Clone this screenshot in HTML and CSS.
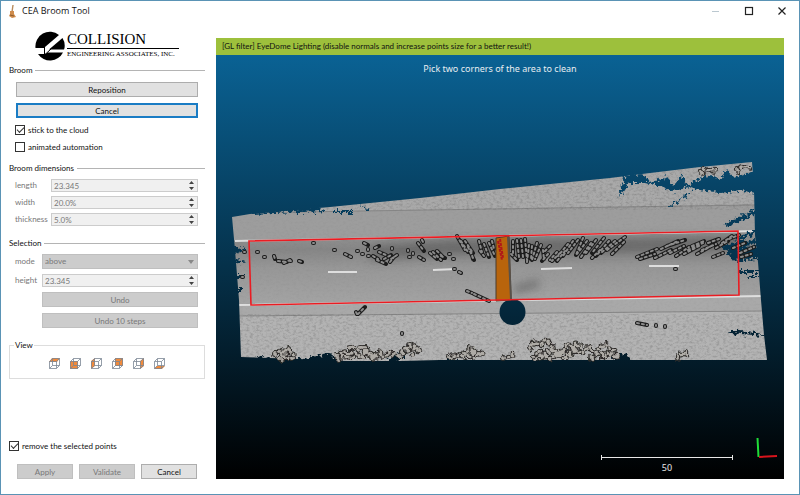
FILE: index.html
```html
<!DOCTYPE html>
<html lang="en">
<head>
  <meta charset="UTF-8" />
  <meta name="viewport" content="width=device-width, initial-scale=1" />
  <title>CEA Broom Tool</title>
  <link rel="stylesheet" href="styles.css">
</head>
<body>

<header class="titlebar">
  <svg class="app-icon" viewBox="0 0 12 16" aria-hidden="true">
    <path d="M7 2 L6 9" stroke="#b98a5a" stroke-width="1.4" />
    <path d="M4 8 L8 8 L8 11 L10 14 L6 15 L3 13 L4 11 Z" fill="#cf8c4c" />
    <path d="M4 12 L8 13" stroke="#8c5a2c" stroke-width="1" />
  </svg>
  <h1>CEA Broom Tool</h1>
  <div class="window-buttons">
    <button type="button" aria-label="Minimize"><svg viewBox="0 0 10 10"><path d="M1 5.5 H8" stroke="#bbc8d0" /></svg></button>
    <button type="button" aria-label="Maximize"><svg viewBox="0 0 10 10"><rect x="1.5" y="1.5" width="7" height="7" fill="none" stroke="#222" stroke-width="1.2" /></svg></button>
    <button type="button" aria-label="Close"><svg viewBox="0 0 10 10"><path d="M1.5 1.5 L8.5 8.5 M8.5 1.5 L1.5 8.5" stroke="#222" stroke-width="1.2" /></svg></button>
  </div>
</header>

<main class="workspace">
  <form class="panel">
    <div class="brand">
      <svg class="brand-mark" viewBox="0 0 30 30" aria-hidden="true">
        <path d="M0.500 17 A14.500 14.500 0 0 1 24 4 L10 16 V17 Z" fill="#000" />
        <path d="M27.500 7 A14.500 14.500 0 0 1 29.500 17 L29 18.500 H14 Z" fill="#000" />
        <path d="M3 23 H10 L13 21.500 H28 A14.500 14.500 0 0 1 3 23 Z" fill="#000" />
        <path d="M9.500 16 V24 M9.500 24 L16 18" stroke="#000" fill="none" />
      </svg>
      <div class="brand-text">
        <span class="brand-name">COLLISION</span>
        <span class="brand-sub">ENGINEERING ASSOCIATES, INC.</span>
      </div>
    </div>

    <fieldset class="group">
      <legend>Broom</legend>
      <div class="stack">
        <button type="button">Reposition</button>
        <button type="button" class="focused">Cancel</button>
      </div>
      <label class="check"><input type="checkbox" checked> stick to the cloud</label>
      <label class="check"><input type="checkbox"> animated automation</label>
    </fieldset>

    <fieldset class="group">
      <legend>Broom dimensions</legend>
      <div class="fields">
        <label for="length">length</label>
        <div class="spin"><input type="text" id="length" value="23.345" disabled><svg viewBox="0 0 5 9"><path d="M0 3 L2.500 0 L5 3 Z M0 6 L2.500 9 L5 6 Z" /></svg></div>
        <label for="width">width</label>
        <div class="spin"><input type="text" id="width" value="20.0%" disabled><svg viewBox="0 0 5 9"><path d="M0 3 L2.500 0 L5 3 Z M0 6 L2.500 9 L5 6 Z" /></svg></div>
        <label for="thickness">thickness</label>
        <div class="spin"><input type="text" id="thickness" value="5.0%" disabled><svg viewBox="0 0 5 9"><path d="M0 3 L2.500 0 L5 3 Z M0 6 L2.500 9 L5 6 Z" /></svg></div>
      </div>
    </fieldset>

    <fieldset class="group">
      <legend>Selection</legend>
      <div class="fields fields-selection">
        <label for="mode">mode</label>
        <div class="combo">
          <select id="mode" disabled><option>above</option></select>
          <svg viewBox="0 0 6 4"><path d="M0 0 H6 L3 4 Z" /></svg>
        </div>
        <label for="height">height</label>
        <div class="spin"><input type="text" id="height" value="23.345" disabled><svg viewBox="0 0 5 9"><path d="M0 3 L2.500 0 L5 3 Z M0 6 L2.500 9 L5 6 Z" /></svg></div>
        <div class="stack undo">
          <button type="button" disabled>Undo</button>
          <button type="button" disabled>Undo 10 steps</button>
        </div>
      </div>
    </fieldset>

    <svg class="defs" aria-hidden="true">
      <symbol id="cube" viewBox="0 0 13 13">
        <path d="M1.500 4.500 H8.500 V11.500 H1.500 Z M4.500 1.500 H11.500 V8.500 H4.500 Z M1.500 4.500 L4.500 1.500 M8.500 4.500 L11.500 1.500 M8.500 11.500 L11.500 8.500 M1.500 11.500 L4.500 8.500" fill="none" stroke="#7b8794" stroke-width="0.8" />
      </symbol>
    </svg>
    <fieldset class="view-box">
      <legend>View</legend>
      <button type="button" aria-label="Top view"><svg viewBox="0 0 13 13"><path class="face" d="M1 5 L4 1 H12 L9 5 Z" /><use href="#cube" /></svg></button>
      <button type="button" aria-label="Front view"><svg viewBox="0 0 13 13"><path class="face" d="M1 4 H9 V12 H1 Z" /><use href="#cube" /></svg></button>
      <button type="button" aria-label="Left view"><svg viewBox="0 0 13 13"><path class="face" d="M1 4 L5 1 V9 L1 12 Z" /><use href="#cube" /></svg></button>
      <button type="button" aria-label="Back view"><svg viewBox="0 0 13 13"><path class="face" d="M4 1 H12 V9 H4 Z" /><use href="#cube" /></svg></button>
      <button type="button" aria-label="Right view"><svg viewBox="0 0 13 13"><path class="face" d="M8 4 L12 1 V9 L8 12 Z" /><use href="#cube" /></svg></button>
      <button type="button" aria-label="Bottom view"><svg viewBox="0 0 13 13"><path class="face" d="M1 12 L4 9 H12 L9 12 Z" /><use href="#cube" /></svg></button>
    </fieldset>

    <div class="footer">
      <label class="check"><input type="checkbox" checked> remove the selected points</label>
      <div class="actions">
        <button type="button" disabled>Apply</button>
        <button type="button" disabled>Validate</button>
        <button type="button">Cancel</button>
      </div>
    </div>
  </form>

  <section class="viewer">
    <p class="filter-bar">[GL filter] EyeDome Lighting (disable normals and increase points size for a better result!)</p>
    <div class="canvas">
      <p class="hint">Pick two corners of the area to clean</p>
      <!-- scene units are window pixels, origin at the canvas corner -->
      <svg class="scene" viewBox="216 55 568 424" role="img" aria-label="Point cloud of a road">
        <defs>
          <filter id="grain" x="0" y="0" width="100%" height="100%">
            <feTurbulence type="fractalNoise" baseFrequency="0.3 0.5" numOctaves="3" seed="4" />
            <feColorMatrix values="0 0 0 0 0.1  0 0 0 0 0.1  0 0 0 0 0.1  2 0 0 0 -0.85" />
          </filter>
          <filter id="soft" x="-20%" y="-50%" width="140%" height="200%"><feGaussianBlur stdDeviation="5" /></filter>
          <filter id="ragged" x="-5%" y="-5%" width="110%" height="110%">
            <feTurbulence type="fractalNoise" baseFrequency="0.3" numOctaves="2" seed="9" />
            <feDisplacementMap in="SourceGraphic" scale="9" xChannelSelector="R" yChannelSelector="G" />
          </filter>
          <filter id="uneven" x="-5%" y="-5%" width="110%" height="110%">
            <feTurbulence type="fractalNoise" baseFrequency="0.12" numOctaves="2" seed="3" />
            <feDisplacementMap in="SourceGraphic" scale="9" xChannelSelector="R" yChannelSelector="G" />
          </filter>
          <linearGradient id="road" x1="0" y1="0" x2="0" y2="1">
            <stop offset="0" stop-color="#949494" />
            <stop offset="0.25" stop-color="#868686" />
            <stop offset="0.5" stop-color="#979797" />
            <stop offset="1" stop-color="#a4a4a4" />
          </linearGradient>
          <clipPath id="cloud">
            <path d="M232 217 L250 214 L330 207 L420 198 L500 189 L560 183 L610 178 L650 173 L700 167 L752 162 L754 188 L755 235 L758 262 L761 300 L764 335 L767 360 L584 360 L440 360 L400 361 L330 361 L300 359 L241 357 L239 300 L235 250 Z" />
          </clipPath>
          <!-- gaps in the scan and the hole under the scanner -->
          <mask id="gaps" maskUnits="userSpaceOnUse" x="216" y="150" width="568" height="220">
            <rect x="216" y="150" width="568" height="220" fill="#fff" />
            <circle cx="512.500" cy="312" r="13" />
            <g filter="url(#ragged)">
              <path d="M248 211 l70 -4 l5 4 l-72 3 Z M335 211 l18 0 v2 h-18 Z M358 202 l12 9 l-3 0 Z" />
              <path d="M618 177 l24 -3 l8 8 l18 -5 l5 9 l10 -11 l4 12 l-14 5 l-12 -5 l-14 -4 l-18 0 l-10 14 l5 -20 Z" />
              <path d="M692 182 l18 -7 l10 5 l6 -10 l8 7 l22 -6 v22 l-16 -3 l-20 3 l-20 -3 l-14 -3 Z" />
              <path d="M668 207 l20 -14 l2 1 l-20 13 Z M725 224 l30 -13 v3 l-28 13 Z M735 239 l22 -10 v4 l-20 8 Z M733 219 l22 -11 v2 Z" />
              <path d="M722 245 l20 -4 l14 -1 v3 l-20 6 l21 -4 v14 l-24 2 Z M738 270 h20 v3 h-20 Z M748 276 h12 v2 h-10 Z M724 331 l15 0 l25 3 v2 l-34 -3 Z" />
              <path d="M232 246 l14 3 l-10 5 Z M232 259 l14 3 l-14 3 Z M232 275 h12 v3 h-12 Z M236 289 h6 v3 h-6 Z" />
              <path d="M240 362 L262 356 L270 360 L304 359 L330 353 L342 364 H240 Z M388 360 l10 -6 l8 -2 l-6 8 l-12 5 Z M440 364 v-3 h30 v3 Z M612 352 l14 3 l8 8 h-20 Z" />
            </g>
          </mask>
          <!-- stones and logs are short strokes with round ends -->
          <path id="logs" d="M244 252 h1 M257 252 h1 M264 257 h1 M274 256 l1 3 M278 261 l9 1 M284 263 l6 -3 M290 261 h1 M299 261 l3 1 M242 277 h1 M313 243 h1 M334 250 h1 M345 254 l6 3 M357 251 h1 M362 254 h1 M364 243 l4 2 M368 249 v1 M368 256 h1 M375 248 l4 -2 M373 256 l5 3 M379 252 l7 3 M377 260 l9 4 M384 259 l7 -4 M390 262 l4 -5 M392 248 v1 M397 255 l-6 4 M408 250 v1 M413 253 v1 M409 257 h1 M419 257 l5 3
            M418 243 l6 8 M422 240 l1 2 M430 253 l7 6 M433 252 l8 8 M437 251 l7 7 M441 256 l4 2 M449 254 h1 M453 259 h1 M454 269 h1 M459 272 l2 1 M457 236 l8 14 M461 241 l7 11 M465 241 l8 12 M468 247 l6 13 M471 251 l2 8 M479 241 l3 11 M480 251 l4 5 M484 244 l5 13 M489 243 l6 13 M492 241 l2 8 M513 241 v14 M511 254 l6 6 M517 240 l2 17 M521 240 l2 17 M525 239 l2 21 M529 245 l-2 17 M532 246 l-1 13 M537 243 l-5 17 M541 245 l-6 14 M543 250 l1 9 M548 254 l-6 7 M550 246 l-6 6 M557 252 l-7 8 M560 253 l-8 8 M565 251 l-8 10 M568 244 l-10 12 M573 241 l-10 15 M578 240 l-10 13 M583 238 l-7 17 M587 241 l-10 13 M591 243 l-10 14 M596 240 l-10 13 M600 250 l-8 8 M604 238 l-12 15 M609 241 l-13 15 M615 241 l-14 12 M625 237 l-18 13 M624 242 l-12 12 M467 291 l5 2 M474 294 l15 7 M358 314 l7 -7 M357 314 l-1 -2 M402 333 v1 M675 269 h1 M637 323 l10 2 M656 325 v1 M665 326 v1
            M640 259 l15 -5 M637 257 l20 -8 M655 258 l16 -8 M661 249 l17 -8 M667 246 l18 -6 M670 253 l14 -7 M676 256 l13 -9 M684 254 l15 -8 M688 250 l15 -7 M692 246 l12 -5 M702 250 l14 -6 M697 254 l16 -9 M708 243 l11 -4 M716 248 l12 -7 M722 243 l10 -7 M729 239 l10 -4 M713 257 l10 -4 M740 253 l14 -6 M741 257 l10 -3 M733 248 l12 -5" />
          <path id="rubble" d="M275 354 l5 -4 l4 4 l4 -5 l5 5 l3 -3 M280 359 l5 -4 l5 4 l6 -3 M337 356 l6 -5 l5 3 l4 -8 l6 4 l5 -6 l4 7 l5 5 l6 -3 l5 4 l5 -6 l5 4 M338 359 l6 -3 l6 3 l6 -5 l6 4 l6 -6 l7 5 l7 -5 M400 356 l5 -6 l5 -5 l6 4 l5 6 M402 352 l6 -5 l7 -3 l4 8 M412 354 l4 2 M450 358 l6 -4 l6 4 l5 -5 l6 5 l6 -6 l5 5 M465 354 l5 -4 l6 2 M504 358 l7 -2 l6 -3 M530 348 l4 -6 l6 3 l5 -5 l5 4 l5 6 M532 356 l7 -5 l6 4 l6 -6 l6 5 l7 -4 l6 5 l6 -6 l6 5 l7 -6 l6 5 M537 359 l6 -4 l7 4 l7 -5 l6 5 l7 -4 M562 350 l5 -6 l5 4 l4 -5 l6 4 M595 352 l5 -5 l5 -4 l6 5 l6 3 M592 358 l6 -4 l6 3 l6 -5 l7 5 M678 357 l5 -5 l6 5 M701 172 l6 -3 l5 3 l5 -3 M737 170 l6 -4 l5 4 l2 -5" />
        </defs>

        <g clip-path="url(#cloud)">
          <g mask="url(#gaps)">
            <rect x="216" y="150" width="568" height="212" fill="#a9a9a9" />
            <path d="M230 213 L770 204 L770 231 L230 242 Z" fill="#9d9d9d" />
            <path d="M230 241 L770 231 L770 296 L230 305 Z" fill="url(#road)" />
            <path d="M230 316 L770 311 V365 H230 Z" fill="#b3b3b3" />
            <path d="M232 213 L755 205 M239 316 L762 311" stroke="#868686" fill="none" />
            <g filter="url(#soft)">
              <path d="M370 254 L450 247 L620 245 L740 243" stroke="#4b4b4b" stroke-width="14" fill="none" opacity="0.5" />
              <path d="M514 290 l25 -7" stroke="#444" stroke-width="8" opacity="0.5" />
            </g>
            <rect x="216" y="150" width="568" height="60" filter="url(#grain)" opacity="0.35" />
            <rect x="216" y="210" width="568" height="104" filter="url(#grain)" opacity="0.08" />
            <rect x="216" y="314" width="568" height="50" filter="url(#grain)" opacity="0.35" />
            <path class="marking" d="M235 241 L760 231 M238 305 L762 296" />
            <path class="marking" d="M328 272 H357 M433 270 L457 269 M541 269 L572 268 M649 266 L679 266" />
          </g>
        </g>

        <g filter="url(#uneven)">
          <use href="#rubble" class="rubble-edge" />
          <use href="#rubble" class="rubble-fill" />
        </g>
        <use href="#logs" class="log-edge" />
        <use href="#logs" class="log-fill" />

        <path d="M496 238 L509 236 L511 300 L496 301 Z" fill="#b8640c" stroke="#4a3a2a" />
        <path d="M508 237 L511 299" stroke="#58514a" stroke-width="2" />
        <path d="M498 241 L502 260 M500 239 L503 258" stroke="#b01818" stroke-width="2" stroke-dasharray="3 1" />

        <path d="M249 241 L738 231 L739 295 L251 305 Z" fill="none" stroke="#ea1c22" stroke-width="1.600" />

        <path d="M601.500 455 V460 M601.500 457.500 H732.500 M732.500 455 V460" stroke="#e8e8e8" fill="none" />
        <text x="667" y="471" class="scale-text">50</text>
        <path d="M757.500 438 L758.500 457" stroke="#1fdc38" stroke-width="2" />
        <path d="M759 457 L777 456" stroke="#d8141c" stroke-width="2" />
      </svg>
    </div>
  </section>
</main>

</body>
</html>
```
FILE: styles.css
```css
* {
  box-sizing: border-box;
}
body {
  margin: 0;
  min-height: 100vh;
  display: flex;
  flex-direction: column;
  border: 1px solid #5a93b5;
  background: #fff;
  color: #111;
  font-family: Lato, sans-serif;
  font-size: 8px;
  line-height: 14px;
}
h1, p, fieldset {
  margin: 0;
}
button, input, select {
  font: inherit;
  color: inherit;
}
/* Title bar */
.titlebar {
  display: flex;
  align-items: center;
  height: 20px;
  padding: 0 7px 0 5px;
}
.app-icon {
  width: 12px;
  height: 16px;
}
h1 {
  margin-left: 4px;
  font-family: 'Open Sans', sans-serif;
  font-size: 9px;
  font-weight: 400;
}
.window-buttons {
  display: flex;
  gap: 13px;
  margin-left: auto;
}
.window-buttons button {
  display: flex;
  justify-content: center;
  width: 20px;
  padding: 0;
  border: 0;
  background: none;
}
.window-buttons svg {
  width: 10px;
  height: 10px;
}
/* Main area */
.workspace {
  flex: 1;
  display: grid;
  grid-template-columns: 196px 1fr;
  gap: 11px;
  padding: 10px 15px 15px 8px;
}
.panel {
  display: flex;
  flex-direction: column;
}
.brand {
  display: flex;
  gap: 2px;
  padding-left: 26px;
  height: 32px;
  color: #000;
  font-family: 'Liberation Serif', serif;
}
.brand-mark {
  width: 30px;
  height: 30px;
}
.brand-text {
  display: flex;
  flex-direction: column;
  width: 112px;
}
.brand-name {
  font-size: 15px;
  line-height: 17px;
  border-bottom: 1px solid #000;
}
.brand-sub {
  font-size: 7px;
  line-height: 11px;
  white-space: nowrap;
}
.group {
  min-width: 0;
  padding: 0;
  border: 0;
  margin-bottom: 6px;
}
.group legend {
  display: flex;
  align-items: center;
  width: 100%;
  padding: 0;
  gap: 3px;
}
.group legend::after {
  content: '';
  flex: 1;
  height: 1px;
  background: #b4b4b4;
}
.stack {
  display: flex;
  flex-direction: column;
  gap: 6px;
  padding: 5px 7px 3px;
}
.stack button,
.actions button {
  height: 15px;
  padding: 0;
  border: 1px solid #adadad;
  background: #e1e1e1;
  line-height: 12px;
}
.stack button.focused {
  border: 2px solid #1a7cc4;
  line-height: 10px;
}
.stack button:disabled,
.actions button:disabled {
  border-color: #bfbfbf;
  background: #ccc;
  color: #787878;
}
.check {
  display: flex;
  align-items: center;
  gap: 3px;
  height: 17px;
  padding-left: 6px;
}
.check input {
  appearance: none;
  width: 10px;
  height: 10px;
  margin: 0;
  border: 1px solid #333;
  background: #fff;
}
.check input:checked::before {
  content: '';
  display: block;
  width: 6px;
  height: 3px;
  margin: 1px;
  border: solid #333;
  border-width: 0 0 1px 1px;
  transform: rotate(-45deg);
}
.fields {
  display: grid;
  grid-template-columns: 34px 1fr;
  align-items: center;
  gap: 4px 2px;
  padding: 4px 7px 4px 6px;
  color: #787878;
  line-height: 13px;
}
.fields-selection {
  grid-template-columns: 25px 1fr;
  row-gap: 5px;
}
.spin,
.combo {
  position: relative;
}
.spin input,
.combo select {
  appearance: none;
  display: block;
  width: 100%;
  height: 13px;
  padding: 0 2px;
  border: 1px solid #ccc;
  border-radius: 0;
  background: #f0f0f0;
  color: #787878;
  line-height: 11px;
  opacity: 1;
}
.combo select {
  height: 15px;
  border-color: #bfbfbf;
  background: #ccc;
}
.spin svg {
  position: absolute;
  top: 2px;
  right: 4px;
  width: 5px;
  height: 9px;
  fill: #444;
}
.combo svg {
  position: absolute;
  top: 6px;
  right: 4px;
  width: 6px;
  height: 4px;
  fill: #888;
}
.undo {
  grid-column: 2;
  padding: 0;
}
/* View */
.defs {
  display: none;
}
.view-box {
  display: flex;
  justify-content: center;
  gap: 8px;
  min-width: 0;
  padding: 5px 0 8px;
  border: 1px solid #ddd;
}
.view-box legend {
  margin-left: 4px;
  padding: 0 1px;
}
.view-box button {
  padding: 0;
  border: 0;
  background: none;
  height: 13px;
}
.view-box svg {
  display: block;
  width: 13px;
  height: 13px;
}
.face {
  fill: #f08a3c;
}
.footer {
  margin-top: auto;
}
.footer .check {
  padding-left: 0;
}
.actions {
  display: grid;
  grid-template-columns: 1fr 1fr 1fr;
  gap: 6px;
  padding: 10px 8px 0;
}
/* 3D view */
.viewer {
  display: flex;
  flex-direction: column;
  padding-top: 7px;
}
.filter-bar {
  height: 17px;
  padding-left: 6px;
  background: #9dc03c;
  color: #111;
  line-height: 17px;
}
.canvas {
  position: relative;
  flex: 1;
  background: linear-gradient(#0a6294, #000);
}
.hint {
  position: absolute;
  top: 7px;
  width: 100%;
  color: #e8eef2;
  font-family: 'Noto Sans', sans-serif;
  font-size: 9px;
  text-align: center;
}
.scene {
  display: block;
  width: 100%;
  height: auto;
}
.scene .marking {
  fill: none;
  stroke: #dedede;
  stroke-width: 2;
}
.log-edge,
.log-fill,
.rubble-edge,
.rubble-fill {
  fill: none;
  stroke-linecap: round;
  stroke-linejoin: round;
}
.log-edge {
  stroke: #1c1c1c;
  stroke-width: 4px;
}
.log-fill {
  stroke: #8c8c8c;
  stroke-width: 2px;
  stroke-dasharray: 2 3;
}
.rubble-edge {
  stroke: #2e2c2a;
  stroke-width: 6px;
  stroke-dasharray: 0 5;
}
.rubble-fill {
  stroke: #aeaba6;
  stroke-width: 4px;
  stroke-dasharray: 0 5;
}
.scale-text {
  fill: #e8e8e8;
  font-family: 'Noto Sans', sans-serif;
  font-size: 9px;
  text-anchor: middle;
}
```
